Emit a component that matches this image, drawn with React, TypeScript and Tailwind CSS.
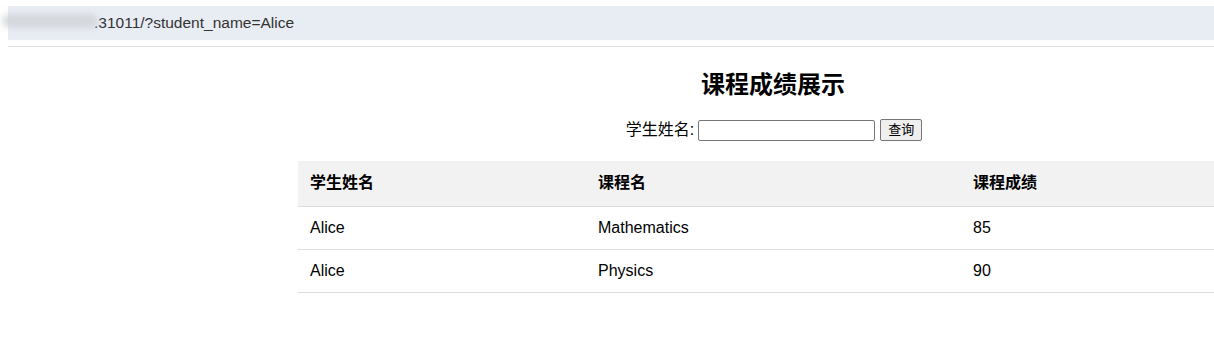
export default function App() {
  const rows = [
    { name: "Alice", course: "Mathematics", score: 85 },
    { name: "Alice", course: "Physics", score: 90 },
  ];

  return (
    <div
      className="w-[1214px] h-[340px] bg-white text-black overflow-hidden"
      style={{ fontFamily: '"Liberation Sans", "Noto Sans CJK SC", sans-serif' }}
    >
      {/* Address bar */}
      <div className="ml-[8px] mt-[6px] h-[34px] bg-[#e8ecf3] flex items-center relative">
        <div className="absolute left-[-6px] top-[8px] w-[96px] h-[14px] rounded-full bg-[#d0d3d8] blur-[3px] opacity-80" />
        <span className="pl-[86px] text-[15.5px] text-[#333]">.31011/?student_name=Alice</span>
      </div>
      <div className="ml-[8px] mt-[6px] h-px bg-[#dedede]" />

      {/* Content */}
      <div className="ml-[298px]">
        <h2 className="text-[24px] font-bold text-center leading-[28px] mt-[24px] pl-[34px]">课程成绩展示</h2>
        <form
          className="flex items-center justify-center gap-[4px] mt-[19px] pl-[36px] text-[16px]"
          onSubmit={(e) => e.preventDefault()}
        >
          <label>学生姓名:</label>
          <input
            type="text"
            className="w-[177px] h-[21px] border border-[#767676] rounded-[2px] px-1 text-[13px]"
          />
          <button
            type="submit"
            className="ml-[1px] h-[22px] px-[7px] border border-[#767676] rounded-[2px] bg-[#efefef] text-[13px]"
          >
            查询
          </button>
        </form>

        <table className="mt-[19px] w-[916px] border-collapse text-[16px]">
          <thead>
            <tr className="bg-[#f2f2f2] border-b border-[#dddddd]">
              <th className="w-[288px] text-left font-bold px-[12px] h-[45px]">学生姓名</th>
              <th className="w-[375px] text-left font-bold px-[12px]">课程名</th>
              <th className="text-left font-bold px-[12px]">课程成绩</th>
            </tr>
          </thead>
          <tbody>
            {rows.map((r, i) => (
              <tr key={i} className="border-b border-[#dddddd]">
                <td className="px-[12px] h-[43px]">{r.name}</td>
                <td className="px-[12px]">{r.course}</td>
                <td className="px-[12px]">{r.score}</td>
              </tr>
            ))}
          </tbody>
        </table>
      </div>
    </div>
  );
}
